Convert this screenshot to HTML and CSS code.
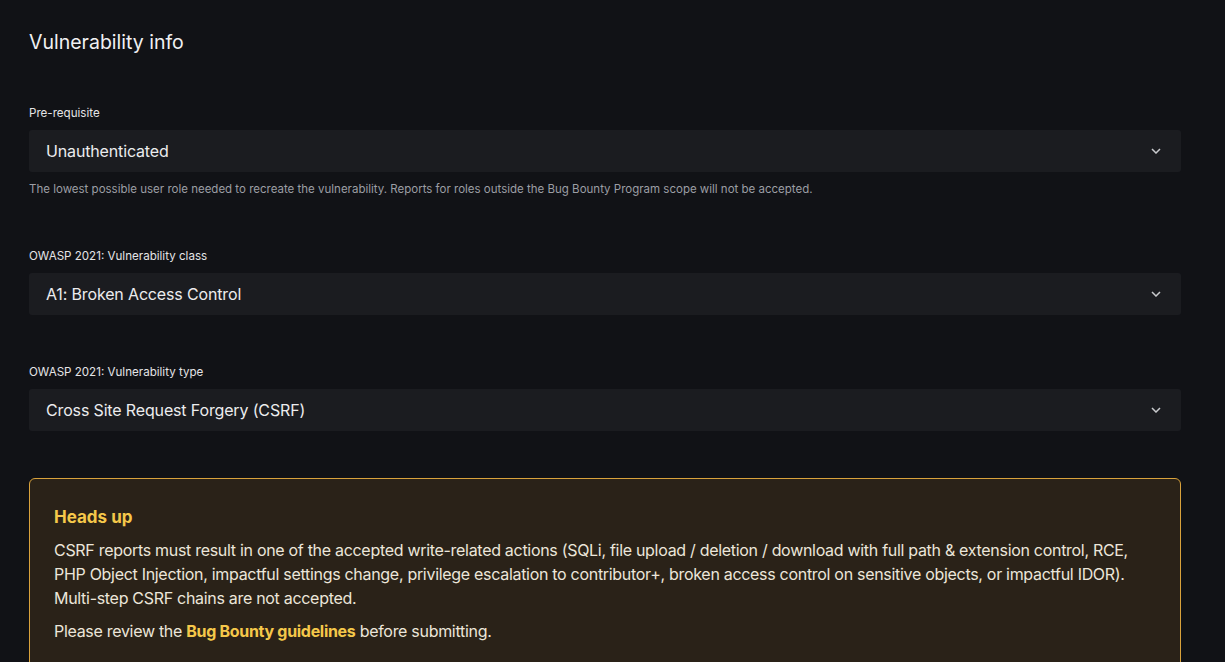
FILE: index.html
```html
<!DOCTYPE html>
<html lang="en">
<head>
    <meta charset="UTF-8">
    <title>Vulnerability info</title>
    <link rel="stylesheet" href="styles.css">
</head>
<body>
    <div class="page">
        <h2 class="title">Vulnerability info</h2>

        <div class="field">
            <label class="label">Pre-requisite</label>
            <div class="select">
                <span>Unauthenticated</span>
                <svg class="chev" width="10" height="6" viewBox="0 0 10 6"><path d="M1 1l4 4 4-4" fill="none" stroke="#c9cacd" stroke-width="1.5"/></svg>
            </div>
            <p class="hint">The lowest possible user role needed to recreate the vulnerability. Reports for roles outside the Bug Bounty Program scope will not be accepted.</p>
        </div>

        <div class="field">
            <label class="label">OWASP 2021: Vulnerability class</label>
            <div class="select">
                <span>A1: Broken Access Control</span>
                <svg class="chev" width="10" height="6" viewBox="0 0 10 6"><path d="M1 1l4 4 4-4" fill="none" stroke="#c9cacd" stroke-width="1.5"/></svg>
            </div>
        </div>

        <div class="field">
            <label class="label">OWASP 2021: Vulnerability type</label>
            <div class="select">
                <span>Cross Site Request Forgery (CSRF)</span>
                <svg class="chev" width="10" height="6" viewBox="0 0 10 6"><path d="M1 1l4 4 4-4" fill="none" stroke="#c9cacd" stroke-width="1.5"/></svg>
            </div>
        </div>

        <div class="notice">
            <h3>Heads up</h3>
            <p>CSRF reports must result in one of the accepted write-related actions (SQLi, file upload / deletion / download with full path &amp; extension control, RCE, PHP Object Injection, impactful settings change, privilege escalation to contributor+, broken access control on sensitive objects, or impactful IDOR). Multi-step CSRF chains are not accepted.</p>
            <p>Please review the <a href="#">Bug Bounty guidelines</a> before submitting.</p>
        </div>
    </div>
</body>
</html>
```

FILE: styles.css
```css
*{
    margin:0;
    padding:0;
    box-sizing:border-box;
}
body{
    background:#111216;
    color:#e6e6e8;
    font-family:Inter, "Liberation Sans", sans-serif;
}
.page{
    width:1152px;
    margin-left:29px;
    padding-top:30px;
}
.title{
    font-size:19.5px;
    font-weight:400;
    line-height:24px;
    color:#f0f0f2;
    margin-bottom:52px;
}
.field{
    margin-bottom:50px;
}
.label{
    display:block;
    font-size:11.6px;
    line-height:14px;
    color:#e4e4e6;
    margin-bottom:10px;
}
.select{
    height:42px;
    background:#1b1c20;
    border-radius:3px;
    padding:0 20px 0 17px;
    display:flex;
    align-items:center;
    justify-content:space-between;
    font-size:16px;
    letter-spacing:-0.15px;
    color:#ececee;
}
.hint{
    font-size:11.5px;
    line-height:14px;
    color:#9c9ea4;
    margin-top:10px;
    padding-bottom:3px;
}
.notice{
    margin-top:-3px;
    background:#2a2218;
    border:1px solid #d9a23c;
    border-radius:6px;
    padding:27px 24px 24px;
    color:#ece6da;
}
.notice h3{
    font-size:17px;
    font-weight:700;
    color:#f5c84a;
    line-height:22px;
    margin-bottom:10px;
}
.notice p{
    font-size:16px;
    line-height:24px;
    letter-spacing:-0.3px;
    margin-bottom:9px;
}
.notice a{
    color:#f5c84a;
    font-weight:700;
    text-decoration:none;
}
```
